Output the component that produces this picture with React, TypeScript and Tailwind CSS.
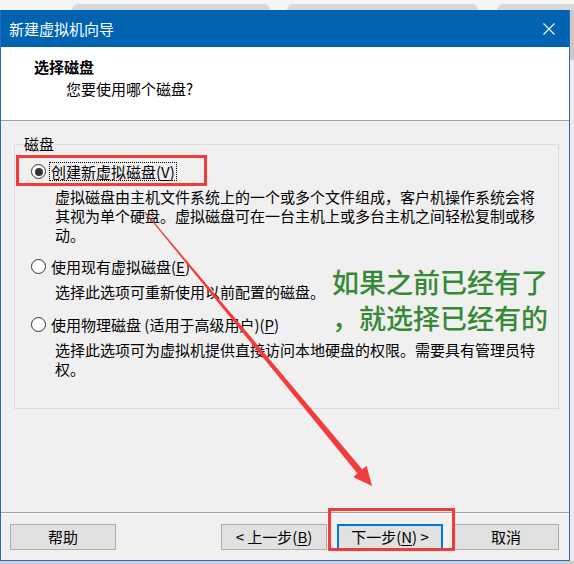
import React from 'react';

const Radio = ({ checked }: { checked?: boolean }) => (
  <span className="flex h-[15px] w-[15px] shrink-0 items-center justify-center rounded-full border border-[#333333] bg-white">
    {checked && <span className="h-[8px] w-[8px] rounded-full bg-[#333333]" />}
  </span>
);

const Key = ({ k }: { k: string }) => <span className="underline underline-offset-2">{k}</span>;

function Option({
  checked,
  focused,
  label,
  hotkey,
  lines,
  className,
}: {
  checked?: boolean;
  focused?: boolean;
  label: string;
  hotkey: string;
  lines: string[];
  className?: string;
}) {
  return (
    <div className={className}>
      <div className="flex h-[19px] items-center pl-[16px]">
        <Radio checked={checked} />
        <span
          className={
            'ml-[3px] border px-[1px] leading-[17px] ' +
            (focused ? 'border-dotted border-black' : 'border-transparent')
          }
        >
          {label}(<Key k={hotkey} />)
        </span>
      </div>
      <div className="mt-[6px] pl-[40px] leading-[19px]">
        {lines.map((l) => (
          <div key={l}>{l}</div>
        ))}
      </div>
    </div>
  );
}

export default function App() {
  return (
    <div className="relative flex h-[564px] w-[574px] flex-col overflow-hidden bg-[#cfcfcf] font-['Noto_Sans_CJK_SC',sans-serif] text-[15px] text-black">
      {/* desktop strip behind the dialog */}
      <div className="flex h-[10px] shrink-0 items-end bg-[#f6f6f6] pl-[72px]">
        <div className="h-[6px] w-[198px] rounded-t-[6px] bg-[#d8d8d8]" />
        <div className="ml-[17px] h-[6px] w-[191px] rounded-t-[6px] bg-[#d8d8d8]" />
        <div className="ml-[19px] h-[6px] flex-1 rounded-tl-[6px] bg-[#d8d8d8]" />
      </div>

      <div className="flex shrink-0">
        <div className="flex w-[570px] flex-col border-x border-b border-[#1f6fc5] bg-[#f0f0f0]">
          {/* title bar */}
          <div className="flex h-[37px] items-center justify-between bg-[#0063b1] pl-[8px] pr-[14px] text-white">
            <span className="leading-[20px]">新建虚拟机向导</span>
            <svg width="12" height="12" viewBox="0 0 12 12" className="shrink-0">
              <path d="M0.5 0.5 L11.5 11.5 M11.5 0.5 L0.5 11.5" stroke="white" strokeWidth="1.1" fill="none" />
            </svg>
          </div>

          {/* header */}
          <div className="h-[74px] border-b border-[#a0a0a0] bg-white pt-[10px]">
            <div className="pl-[33px] font-bold leading-[20px]">选择磁盘</div>
            <div className="mt-[2px] pl-[65px] leading-[20px]">您要使用哪个磁盘?</div>
          </div>

          {/* body */}
          <div className="h-[391px] pt-[13px]">
            <fieldset className="ml-[13px] h-[275px] w-[545px] border border-[#dcdcdc]">
              <legend className="ml-[8px] px-[1px] leading-[20px]">磁盘</legend>
              <Option
                className="pt-[8px]"
                checked
                focused
                label="创建新虚拟磁盘"
                hotkey="V"
                lines={[
                  '虚拟磁盘由主机文件系统上的一个或多个文件组成，客户机操作系统会将',
                  '其视为单个硬盘。虚拟磁盘可在一台主机上或多台主机之间轻松复制或移',
                  '动。',
                ]}
              />
              <Option
                className="mt-[13px]"
                label="使用现有虚拟磁盘"
                hotkey="E"
                lines={['选择此选项可重新使用以前配置的磁盘。']}
              />
              <Option
                className="mt-[14px]"
                label="使用物理磁盘 (适用于高级用户)"
                hotkey="P"
                lines={[
                  '选择此选项可为虚拟机提供直接访问本地硬盘的权限。需要具有管理员特',
                  '权。',
                ]}
              />
            </fieldset>
          </div>

          {/* footer */}
          <div className="h-[48px] border-t border-[#a0a0a0]">
            <div className="h-[1px] bg-white" />
            <div className="flex justify-between pl-[9px] pr-[10px] pt-[10px]">
              <button className="h-[26px] w-[106px] border border-[#adadad] bg-[#e1e1e1] leading-[20px]">帮助</button>
              <div className="flex gap-[10px]">
                <button className="h-[26px] w-[106px] border border-[#adadad] bg-[#e1e1e1] leading-[20px]">
                  &lt; 上一步(<Key k="B" />)
                </button>
                <button className="h-[26px] w-[106px] border-2 border-[#0078d7] bg-[#e1e1e1] leading-[20px]">
                  下一步(<Key k="N" />) &gt;
                </button>
                <button className="h-[26px] w-[106px] border border-[#adadad] bg-[#e1e1e1] leading-[20px]">取消</button>
              </div>
            </div>
          </div>
        </div>
        <div className="flex-1 bg-[#ececec]">
          <div className="h-[50px] bg-[#c9c9c9]" />
        </div>
      </div>

      {/* annotations */}
      <div className="absolute left-[16px] top-[155px] h-[31px] w-[191px] border-[3px] border-[#f23c3c]" />
      <div className="absolute left-[328px] top-[508px] h-[43px] w-[127px] border-[3px] border-[#f23c3c]" />
      <div className="absolute left-[332px] top-[264px] text-[27px] font-medium leading-[36px] text-[#368a36]">
        <div>如果之前已经有了</div>
        <div>，就选择已经有的</div>
      </div>
      <svg className="pointer-events-none absolute left-0 top-0" width="574" height="564" viewBox="0 0 574 564">
        <polygon points="145.4,211.7 362.3,469.4 357.5,473.4 144.6,212.3" fill="#f23c3c" />
        <polygon points="372,486 353.2,477 366.6,465.8" fill="#f23c3c" />
      </svg>
    </div>
  );
}
